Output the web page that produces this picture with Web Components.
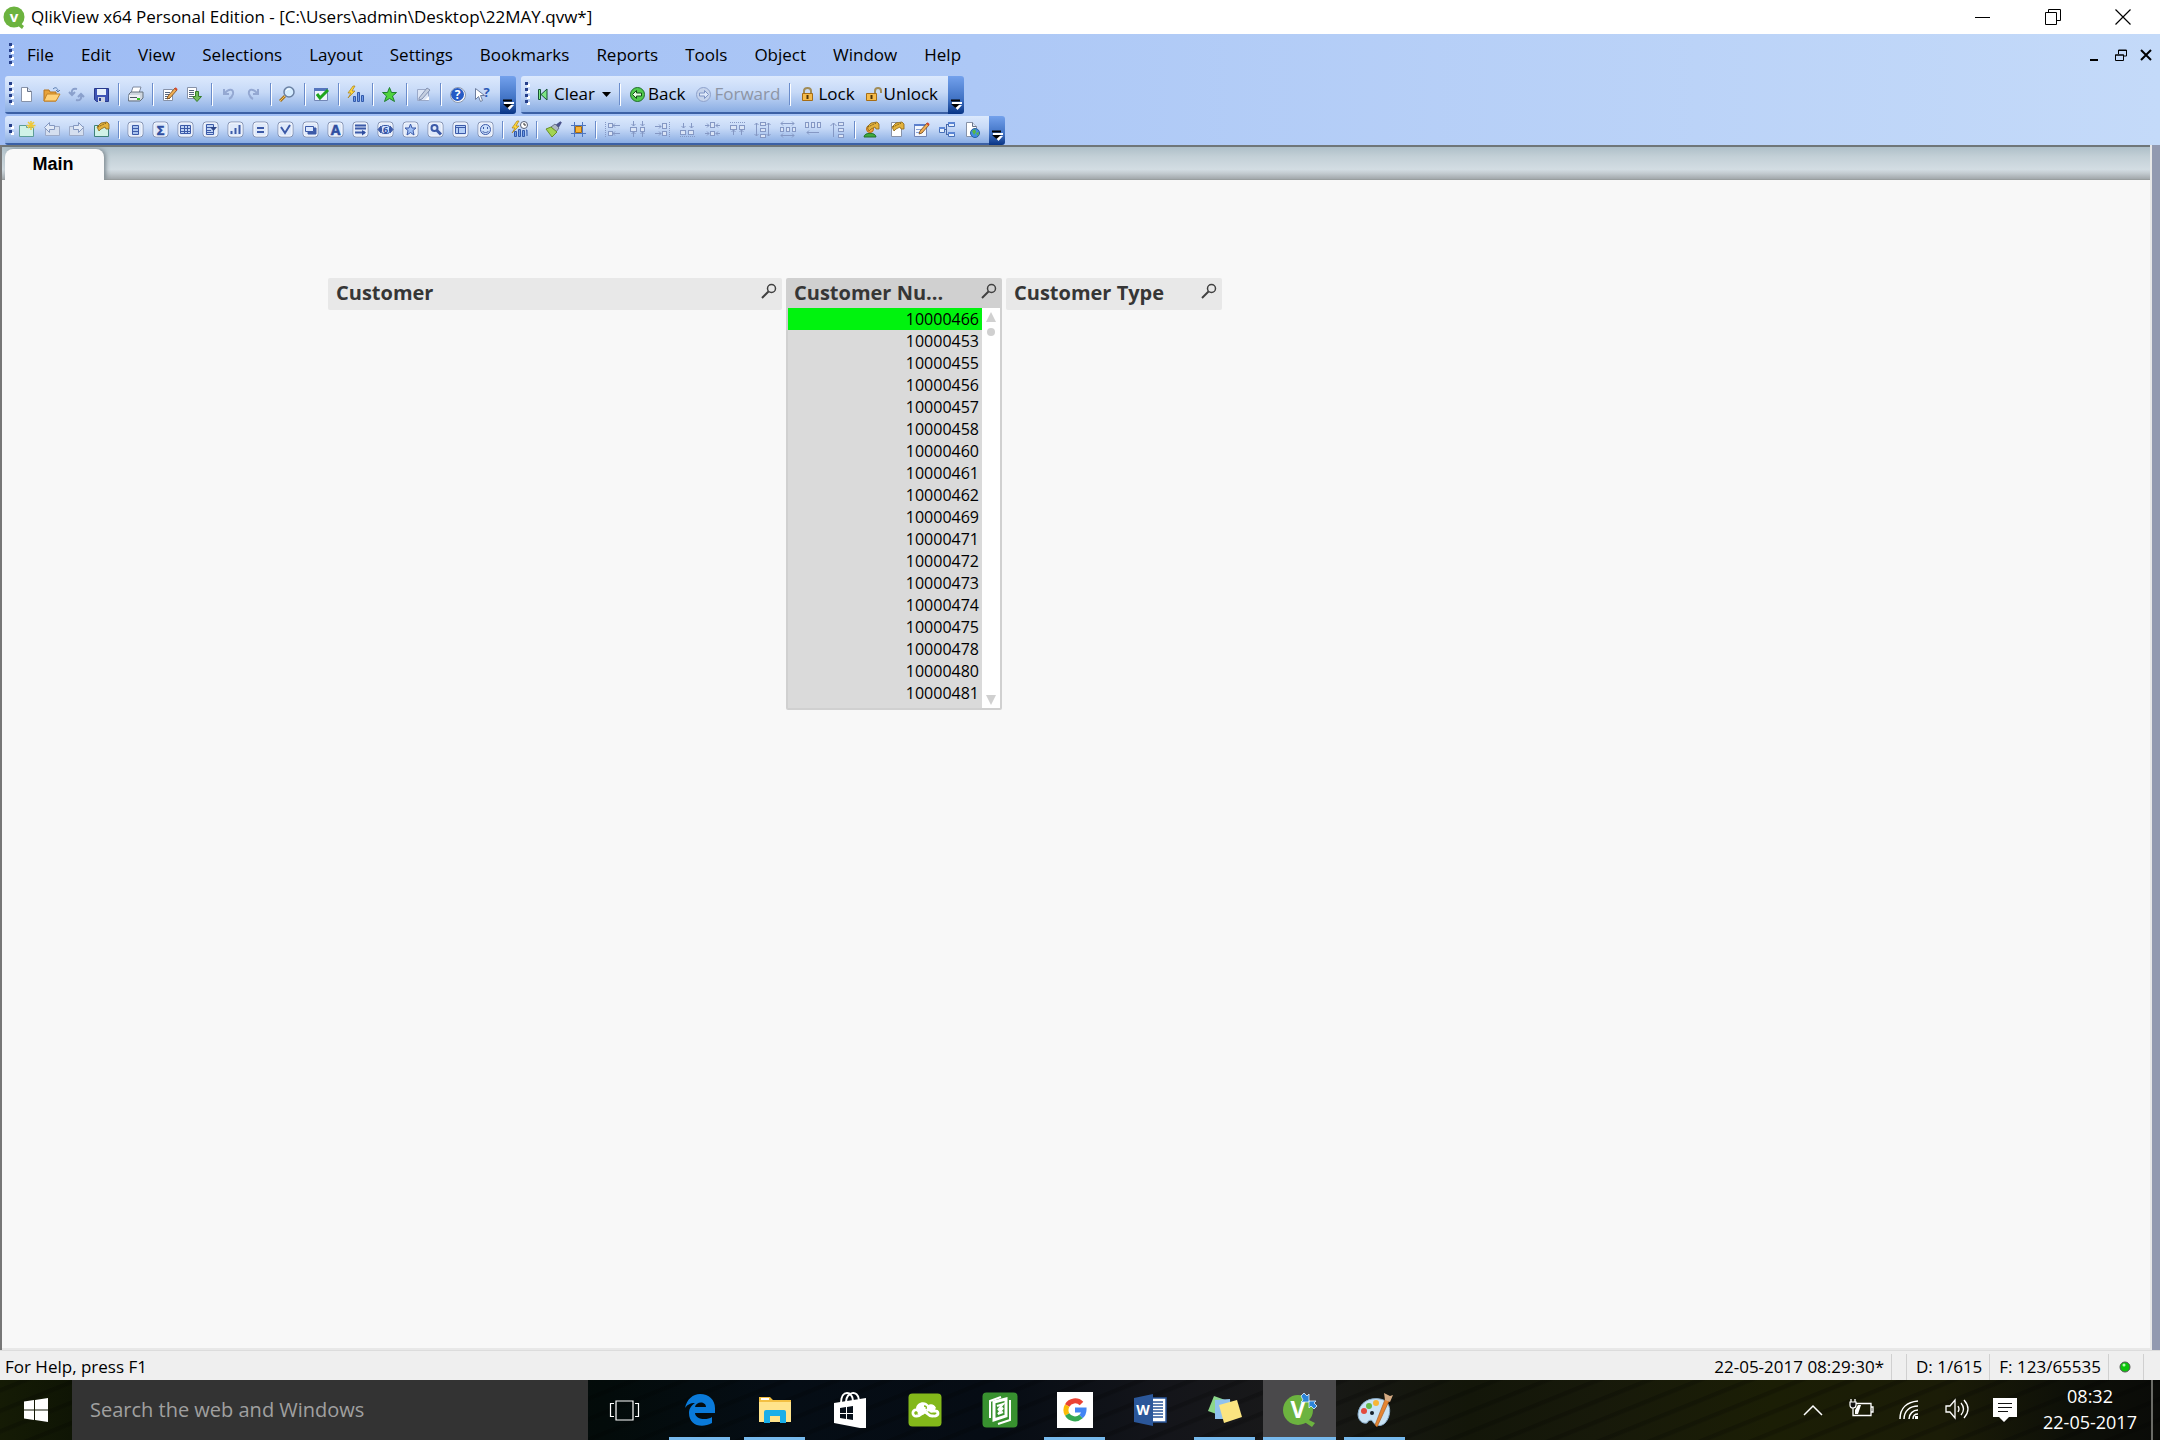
<!DOCTYPE html>
<html lang="en">
<head>
<meta charset="utf-8">
<title>QlikView x64 Personal Edition</title>
<style>
html,body{margin:0;height:100%}
body{font:17px/24px "Open Sans","Noto Sans",sans-serif;color:#000;overflow:hidden}
</style>
</head>
<body>
<qv-app></qv-app>
<script>
const framed = (inner) => `<rect x="1" y="1" width="15" height="15" rx="3" fill="#dfe9fa" stroke="#8593b3"/><rect x="2" y="2" width="13" height="13" rx="2" fill="none" stroke="#fff" stroke-opacity=".7"/><g stroke="#3c5aa8" fill="none" stroke-width="1">${inner}</g>`;
const g = (inner) => `<g stroke="#8598c4" fill="none" stroke-width="1">${inner}</g>`;
const box = (x, y, w, h) => `<rect x="${x}.5" y="${y}.5" width="${w}" height="${h}" fill="#dbe5f6"/>`;
const hand = `<path d="M4 6l4-4 6-1 2 2v5h-3l-1-2-4 2-2 2-1-2z" fill="#e3b23c" stroke="#8a6414" stroke-width=".8"/><path d="M5 6l8-4" stroke="#5d430c" stroke-dasharray="1 1"/>`;
const page = `<path d="M3.500 1.500h6l4 4v10h-10z" fill="#fff" stroke="#8792a8"/><path d="M9.500 1.500v4h4" fill="#dde6f4" stroke="#67738a"/>`;
const bolt = `<path d="M6 0L1 7h3L1 12l7-7H5l3-5z" fill="#ffd83a" stroke="#a8801c" stroke-width=".7"/>`;
const ICONS = {
  logo: [24, `<circle cx="12" cy="12" r="10.500" fill="#6cb33f"/><path d="M17 17l5 4-2 3-5-4z" fill="#6cb33f"/><text x="12" y="17" font-size="15" font-weight="700" text-anchor="middle" fill="#fff">v</text>`],
  newdoc: [17, page],
  open: [17, `<path d="M1 4h5l1 2h6v9H1z" fill="#e8a33a" stroke="#b5731a"/><path d="M4 8h13l-4 7H1z" fill="#ffd27a" stroke="#c78425"/><path d="M10 3c3-3 5 0 5 2m-2-1l2 2 2-2" fill="none" stroke="#5c7fb2"/>`],
  reload: [17, `<path d="M9 3C5 2 3 4 4 8M1 6l3 3 3-3M8 14c4 1 6-1 5-5M10 11l3-3 3 3" fill="none" stroke="#8aa0cc" stroke-width="2"/>`],
  save: [17, `<path d="M1.500 2.500h14v13h-12l-2-2z" fill="#3e55b5" stroke="#283a8c"/><path d="M4 3h9v6H4z" fill="#e6f0fb"/><path d="M5 11h7v5H5z" fill="#cbd3e3"/><path d="M6 12h2v3H6z" fill="#283a8c"/>`],
  print: [17, `<path d="M6 1h8l-2 6H4z" fill="#fff" stroke="#7e8aa0"/><path d="M2 8l2-2h12v6l-3 3H1.500z" fill="#cfd6df" stroke="#67727f"/><path d="M2 9h11v5H2z" fill="#eef1f5"/><path d="M3 11.500h7" stroke="#4e5865"/><rect x="10" y="12" width="3" height="2" fill="#37c426"/>`],
  editpage: [17, `<path d="M2.500 3.500h9v11h-9z" fill="#fff" stroke="#8792a8"/><path d="M4 6.500h5m-5 2h5m-5 2h4m-4 2h5" stroke="#56647e"/><path d="M7 10l7-8 2 2-7 8-3 1z" fill="#f0ae54" stroke="#72471b" stroke-width=".8"/><path d="M14 2l2 2" stroke="#d4472c" stroke-width="2"/>`],
  export: [17, `<path d="M1.500 1.500h9v11h-9z" fill="#fff" stroke="#8792a8"/><path d="M3 4.500h5m-5 2h5m-5 2h5m-5 2h4" stroke="#56647e"/><path d="M9.500 5.500h3v5h3l-4.500 5-4.500-5h3z" fill="#72bd5b" stroke="#377c2a"/>`],
  undo: [17, `<path d="M4 3v5h5M5 7c4-5 9-4 8 1-.5 2-2 4-4 5" fill="none" stroke="#94a8d2" stroke-width="2"/>`],
  redo: [17, `<path d="M13 3v5H8M12 7C8 2 3 3 4 8c.5 2 2 4 4 5" fill="none" stroke="#94a8d2" stroke-width="2"/>`],
  find: [17, `<path d="M6 10l-5 5" stroke="#a67521" stroke-width="3"/><path d="M6 10l-5 5" stroke="#f4c05b" stroke-width="1"/><circle cx="10" cy="6" r="5" fill="#d5ecff" stroke="#6a80a2" stroke-width="1.500"/><path d="M7 5c1-2 3-2 4-2" stroke="#fff" fill="none"/>`],
  selbox: [17, `<path d="M1.500 2.500h13v12h-13z" fill="#edf3fd" stroke="#7286b6"/><path d="M1 2h14v3H1z" fill="#5575bd"/><path d="M4 8l3 4 8-8" fill="none" stroke="#1fa51d" stroke-width="3"/>`],
  boltbars: [17, `<path d="M6.500 10.500h2v5h-2zM10.500 6.500h2v9h-2zM14.500 9.500h2v6h-2z" fill="#6c99e8" stroke="#3259aa"/>` + bolt],
  boltclock: [17, `<path d="M3.500 10.500h2v5h-2zM7.500 8.500h2v7h-2zM11.500 9.500h2v6h-2zM15 9h1v6" fill="#6c99e8" stroke="#3259aa"/>` + bolt + `<circle cx="13" cy="4" r="3.500" fill="#fff" stroke="#566078"/><path d="M13 2v2h2" fill="none" stroke="#333"/>`],
  star: [17, `<path d="M8.500 1.500l2 5h5l-4 3.500 2 5.500-5-3-5 3 2-5.500-4-3.500h5z" fill="#4ed33e" stroke="#1f7f2e"/>`],
  note: [17, `<path d="M2.500 3.500h11v11h-11z" fill="#dce5f5" stroke="#9aa9c9"/><path d="M4 12l8-10 3 2-8 9-3 1z" fill="#c5cfe0" stroke="#8291b2"/><path d="M10 14l4-4v4z" fill="#fff"/>`],
  help: [17, `<circle cx="9" cy="9" r="7.500" fill="#fff" stroke="#8c98ad"/><circle cx="8.500" cy="8.500" r="6.500" fill="#265bc5"/><text x="8.500" y="13" font-size="12" font-weight="700" text-anchor="middle" fill="#fff">?</text>`],
  whats: [17, `<path d="M1.500 2.500v11l3-3 2 5 2-1-2-5h4z" fill="#fff" stroke="#6d7e9f"/><text x="12.500" y="11" font-size="13" font-weight="700" text-anchor="middle" fill="#2957b5">?</text>`],
  clear: [17, `<path d="M3.500 3.500h2v10h-2zM12 3v11L6 8.500z" fill="#7ce684" stroke="#175236"/>`],
  back: [17, `<circle cx="8.500" cy="8.500" r="7" fill="#52ca4c" stroke="#1f6e2a"/><path d="M3.500 8.500l4-4v2.500h5v3h-5V12.500z" fill="#e9ffe3" stroke="#174e1d"/>`],
  forward: [17, `<circle cx="8.500" cy="8.500" r="7" fill="#c5d3ec" stroke="#8ea2cc"/><path d="M13.500 8.500l-4-4v2.500h-5v3h5V12.500z" fill="#dde8fa" stroke="#7e94c4"/>`],
  lock: [17, `<path d="M5 8V5c0-4 7-4 7 0v3" fill="none" stroke="#a18c57" stroke-width="2"/><path d="M3.500 7.500h10v7h-10z" fill="#f5bb4c" stroke="#a66d16"/><path d="M8.500 9v4" stroke="#503407" stroke-width="2"/>`],
  unlock: [17, `<path d="M10 8V5c0-4 6-4 6 0v2" fill="none" stroke="#a18c57" stroke-width="2"/><path d="M1.500 7.500h10v7h-10z" fill="#f5bb4c" stroke="#a66d16"/><path d="M6.500 9v4" stroke="#503407" stroke-width="2"/>`],
  newsheet: [17, `<path d="M1.500 4.500h7v2h7v9h-14z" fill="#d0f2e7" stroke="#5d9d97"/><path d="M13 0v9M8.500 4.500h9M10 1l6 6m0-6l-6 6" stroke="#eec93b" stroke-width="1.500"/>`],
  sheetleft: [17, `<path d="M2.500 5.500h14v9h-14z" fill="#d5dfef" stroke="#9dabc8"/><path d="M1.500 6.500l5-5v3h5v4h-5v3z" fill="#e2eaf7" stroke="#8498c0"/>`],
  sheetright: [17, `<path d="M1.500 5.500h14v9h-14z" fill="#d5dfef" stroke="#9dabc8"/><path d="M15.500 6.500l-5-5v3h-5v4h5v3z" fill="#e2eaf7" stroke="#8498c0"/>`],
  sheetprops: [17, `<path d="M1.500 4.500h14v11h-14z" fill="#d0f2e7" stroke="#3e8179"/>` + hand],
  list: [17, framed(`<path d="M5.500 4.500h6v9h-6zM5 7.500h7M5 10.500h7" fill="#a9c3ee"/>`)],
  sigma: [17, framed(`<text x="8.500" y="13.500" font-size="13" font-weight="700" text-anchor="middle" fill="#2f4ea0" stroke="#2f4ea0" stroke-width=".5">Σ</text>`)],
  grid: [17, framed(`<path d="M3.500 4.500h10v8h-10zM3 7.500h11M3 10.500h11M7.500 4v9M10.500 4v9" fill="#c0d4f5"/>`)],
  multi: [17, framed(`<path d="M4.500 3.500h7v10h-7zM4 6.500h5M4 9.500h5M4 11.500h7" fill="#c0d4f5"/><path d="M8 6h7l-3.500 4z" fill="#2d4688" stroke="none"/>`)],
  chart: [17, framed(`<path d="M4.500 10v3M8.500 7v6M12.500 4v9" stroke-width="2"/>`)],
  equal: [17, framed(`<path d="M5 7h7M5 11h7" stroke-width="2"/>`)],
  check: [17, framed(`<path d="M4 6l4 6 5-8" stroke-width="2"/>`)],
  button: [17, framed(`<path d="M6 11v2h8V7h-2" fill="#3c5aa8"/><path d="M3.500 5.500h8v5h-8z" fill="#dce9ff"/>`)],
  letter: [17, framed(`<text x="8.500" y="13.500" font-size="14" font-weight="700" text-anchor="middle" fill="#2f4ea0" stroke="#2f4ea0" stroke-width=".5">A</text>`)],
  lines: [17, framed(`<path d="M3 4.500h11M3 7.500h11M3 11.500h10" stroke-width="2"/><path d="M10 9l4 2.500-4 3z" fill="#2f4ea0" stroke="none"/>`)],
  slider: [17, framed(`<path d="M4 5l-3 3.500L4 12zM13 5l3 3.500L13 12z" fill="#3c5aa8"/><rect x="4.500" y="4.500" width="8" height="8" rx="2" fill="#cfe1ff"/><text x="8.500" y="12" font-size="9" font-weight="700" text-anchor="middle" fill="#2f4ea0" stroke="none">6</text>`)],
  bookmark: [17, framed(`<path d="M8.500 3l1.500 4h4l-3 2.500 1 4.500-3.500-2.500L5 14l1-4.500L3 7h4z" fill="#9ebff5"/>`)],
  search: [17, framed(`<circle cx="7.500" cy="7" r="3" stroke-width="2"/><path d="M10 9.500l4 4" stroke-width="3"/>`)],
  container: [17, framed(`<path d="M3.500 4.500h10v8h-10zM3 6.500h11M6.500 6v7" fill="#b4cff8"/>`)],
  smile: [17, framed(`<circle cx="8.500" cy="8.500" r="5" fill="#cce0fb"/><path d="M6.500 6v2M10.500 6v2M5.500 10c1 2 5 2 6 0"/>`)],
  brush: [17, `<path d="M16 1l-4 3 1 2z" fill="#6672a8" stroke="#4c548c" stroke-width="2"/><path d="M10 3l4 4-3 4-5-5z" fill="#aeb8c6" stroke="#697289"/><path d="M6 6l6 5-5 5-6-8z" fill="#a3d451" stroke="#688e27"/>`],
  snap: [17, `<path d="M4.500 1v15M12.500 1v15M1 4.500h15M1 12.500h15" stroke="#4d76c1"/><path d="M5.500 5.500h6v6h-6z" fill="#f9b335" stroke="#a96c10"/>`],
  al1: [17, g(`<path d="M1.500 1v15" stroke-dasharray="1 1"/>${box(4,2,4,4)}${box(4,10,4,4)}<path d="M9 4.500h7m-5-2l-2 2 2 2M9 12.500h7m-5-2l-2 2 2 2"/>`)],
  al2: [17, g(`${box(1,6,6,4)}${box(11,6,4,4)}<path d="M4.500 0v5M13.500 0v5M4.500 16v-5M13.500 16v-5M2.500 3l2 2 2-2m5 0l2 2 2-2M2.500 13l2-2 2 2m5 0l2-2 2 2"/>`)],
  al3: [17, g(`<path d="M15.500 1v15" stroke-dasharray="1 1"/>${box(8,2,4,5)}${box(8,10,4,4)}<path d="M1 5.500h6m-2-2l2 2-2 2M1 12.500h6m-2-2l2 2-2 2"/>`)],
  al4: [17, g(`<path d="M1 15.500h15" stroke-dasharray="1 1"/>${box(1,9,5,4)}${box(9,9,5,4)}<path d="M4.500 2v5m-2-2l2 2 2-2M12.500 2v5m-2-2l2 2 2-2"/>`)],
  al5: [17, g(`${box(6,1,4,5)}${box(6,10,4,4)}<path d="M1 4.500h4m-2-2l2 2-2 2M16 4.500h-4m2-2l-2 2 2 2M1 12.500h4m-2-2l2 2-2 2M16 12.500h-4m2-2l-2 2 2 2"/>`)],
  al6: [17, g(`<path d="M1 1.500h15" stroke-dasharray="1 1"/>${box(1,4,6,4)}${box(10,4,5,4)}<path d="M4.500 14V9m-2 2l2-2 2 2M12.500 14V9m-2 2l2-2 2 2"/>`)],
  al7: [17, g(`${box(6,1,5,3)}${box(6,7,5,3)}${box(6,13,5,3)}<path d="M2.500 2v13m-2-11l2-2 2 2m-4 9l2 2 2-2M14.500 2v13m-2-11l2-2 2 2m-4 9l2 2 2-2"/>`)],
  al8: [17, g(`${box(1,6,3,4)}${box(7,6,3,4)}${box(13,6,3,4)}<path d="M2 2.500h13M4 .5l-2 2 2 2m9-4l2 2-2 2M2 14.500h13m-11-2l-2 2 2 2m9-4l2 2-2 2"/>`)],
  al9: [17, g(`${box(1,1,3,5)}${box(7,1,3,5)}${box(13,1,3,5)}<path d="M3 11.500h12m-10-2l-2 2 2 2"/>`)],
  al10: [17, g(`${box(9,1,5,3)}${box(9,7,5,3)}${box(9,13,5,3)}<path d="M4.500 16V2m-3 3l3-3 3 3"/>`)],
  user: [17, `<path d="M1 16c0-5 12-5 12 0z" fill="#3faa3d" stroke="#22702b"/><circle cx="7" cy="8" r="3.500" fill="#f6a53f" stroke="#b96c18"/>` + hand],
  pageprops: [17, page + hand],
  editform: [17, `<path d="M1.500 3.500h12v12h-12z" fill="#f4f8ff" stroke="#7286b6"/><path d="M1 3h12v2H1z" fill="#5b7fcd"/><path d="M3 8.500h6m-6 3h7" stroke="#8aa4d8"/><path d="M7 10l7-8 2 2-7 8-3 1z" fill="#f0ae54" stroke="#72471b" stroke-width=".8"/><path d="M14 2l2 2" stroke="#d4472c" stroke-width="2"/>`],
  tables: [17, `<path d="M5 8.500h3M8.500 4v9M8 3.500h3M8 13.500h3" stroke="#4666a6" fill="none"/><g fill="#e5effd" stroke="#4770b8"><path d="M1.500 6.500h5v5h-5zM10.500 1.500h6v4h-6zM10.500 11.500h6v4h-6z"/></g><path d="M1 7h6M10 2h7M10 12h7" stroke="#5c86d4" stroke-width="2"/>`],
  web: [17, page + `<circle cx="12" cy="12" r="4.500" fill="#438ce2" stroke="#265fa2"/><path d="M9 10l3-2 1 3-2 3zM13 12l3-1-1 4z" fill="#58ba42"/>`],
  caret: [10, `<path d="M0 3h9L4.500 8z" fill="#000"/>`],
  over: [12, `<path d="M2 3h10v2H2z" fill="#fff"/><path d="M1 1.500h9" stroke="#000" stroke-width="2"/><path d="M3 6h9l-4.500 5z" fill="#fff"/><path d="M1 5h9l-4.500 4z" fill="#000"/>`],
  min: [16, `<path d="M0 8.500h15" stroke="#000"/>`],
  restore: [16, `<path d="M.500 3.500h11v12H.500zM3.500 3V.500h12v11H12" fill="none" stroke="#000"/>`],
  close: [16, `<path d="M.500.500l15 15m0-15l-15 15" stroke="#000" stroke-width="1.200"/>`],
  mmin: [12, `<path d="M0 11h8" stroke="#000" stroke-width="2"/>`],
  mrestore: [12, `<path d="M.500 6h8v5.500h-8zM3.500 5V1h8v6H9M3 1.500h9M0 6h9" fill="none" stroke="#000"/>`],
  mclose: [12, `<path d="M1 1l10 10m0-10L1 11" stroke="#000" stroke-width="2"/>`],
  lens: [16, `<circle cx="10.500" cy="5.500" r="4" fill="none" stroke="#404040" stroke-width="1.500"/><path d="M7.500 8.500L1 15" stroke="#404040" stroke-width="2"/>`],
  up: [10, `<path d="M5 0l5 10H0z" fill="#d0d0d0"/>`],
  down: [10, `<path d="M5 10L0 0h10z" fill="#d0d0d0"/>`],
  win: [24, `<path d="M0 3.500l10-1.500v9.500H0zM11 2l13-2v11.500H11zM0 12.500h10V22L0 20.500zM11 12.500h13V24l-13-2z" fill="#fff"/>`],
  taskview: [32, `<path d="M7 7h17v19H7zM5 9.500H1.500v13H5M26 9.500h3.500v13H26" fill="none" stroke="#fff" stroke-width="1.200"/>`],
  edge: [32, `<path d="M1 14C3 5 9 0 16 0c9 0 15 6 15 14v5H11c0 6 11 8 17 4v6c-11 6-23 2-23-10 0-5 3-8 6-10-5 0-8 2-10 5zm10-1h11c0-6-10-6-11 0z" fill="#0a7ad9"/>`],
  explorer: [32, `<path d="M0 3h11l3 3h18v22H0z" fill="#f3bf42"/><path d="M2 4h8v2H2z" fill="#fff"/><path d="M0 8h32v20H0z" fill="#ffe38b"/><path d="M5 29V18q0-2 2-2h18q2 0 2 2v11h-6v-7H11v7z" fill="#19aee9"/>`],
  store: [36, `<path d="M9 11C9-3 21-1 21 9M14 10c0-10 12-13 13-2" fill="none" stroke="#fff" stroke-width="2"/><path d="M2 11l32-5v30l-6 0L2 31z" fill="#fff"/><path d="M8 16l6-1v6H8zM15 15l6-1v7h-6zM8 22h6v5l-6-1zM15 22h6v6l-6-1z" fill="#07101a"/>`],
  cloud: [34, `<rect x=".5" y=".5" width="33" height="33" rx="4" fill="#83b81a"/><path d="M8 16c0-8 11-9 13-3 3-2 6-1 7 2l-5 3-4-1-4 5-5-3z" fill="#fff"/><path d="M11 20a3 3 0 1 0-3 3c4 1 6-4 9-4 3 1 4 5 8 4M20 17c-1-5 6-6 6-1 0 2-3 3-4 1M26 18c5-1 5 5 1 5" fill="none" stroke="#fff" stroke-width="3" stroke-linecap="round"/><path d="M9 20a1 1 0 1 0-1 1M18 16c1-2 0-3-2-3" fill="none" stroke="#83b81a" stroke-width="1.300"/>`],
  notebook: [36, `<rect x=".5" y=".5" width="35" height="35" rx="4" fill="#38912f"/><path d="M28 8v20l-12 4M8 26V9l11-4" fill="none" stroke="#fff" stroke-width="2"/><path d="M12 10l12-3v17l-12 4z" fill="none" stroke="#fff" stroke-width="3"/><path d="M15 14l6-2-5 6 5-2-5 6 5-2" fill="none" stroke="#fff" stroke-width="2"/>`],
  google: [36, `<path fill="#fff" d="M0 0h36v36H0z"/><g fill="none" stroke-width="5"><path d="M24.500 11.500A9 9 0 0 0 10.200 13.500" stroke="#ea4335"/><path d="M10.200 13.500a9 9 0 0 0 0 9" stroke="#fbbc05"/><path d="M10.200 22.500A9 9 0 0 0 24 24.500" stroke="#34a853"/><path d="M24 24.500a9 9 0 0 0 3-6.500h-9" stroke="#4285f4"/></g>`],
  word: [32, `<path d="M17 4h15v24H17z" fill="#fff" stroke="#2b579a" stroke-width="1.500"/><path d="M19 8h10M19 11h10M19 14h10M19 17h10M19 20h10M19 23h10" stroke="#2b579a" stroke-width="1.500"/><path d="M0 4l19-4v32L0 28z" fill="#2b579a"/><text x="9" y="21" font-size="14" font-weight="700" text-anchor="middle" fill="#fff">W</text>`],
  sticky: [34, `<path d="M6 3l14 5-6 15-14-5z" fill="#8cd68a"/><path d="M7 7l15-1 1 20H7z" fill="#8fc1ee"/><path d="M11 12l18-5 5 17-18 6z" fill="#fbe480"/>`],
  qlik: [34, `<circle cx="15" cy="17" r="15" fill="#6cb33f"/><path d="M22 25l10 5-3 4-9-6z" fill="#6cb33f"/><text x="15" y="25" font-size="23" font-weight="700" text-anchor="middle" fill="#fff">V</text><path d="M18 3l3-3 3 3 2-2v8h-8l2-2zM34 13l-3 3-3-3-2 2V8h7l-2 2z" fill="#2c84d8" stroke="#e5f3ff" stroke-width=".8"/>`],
  paint: [36, `<path d="M1 22C2 11 12 5 23 7c13 2 11 18 5 24-4 4-10 3-12-1-1-3-5-2-6 1-5 1-9-3-9-9z" fill="#c9e3f5" stroke="#88abc8"/><circle cx="7" cy="19" r="3" fill="#e24b3d"/><circle cx="12" cy="14" r="3" fill="#62b948"/><circle cx="19" cy="11" r="3" fill="#f7b535"/><circle cx="15" cy="21" r="2" fill="#15212b"/><path d="M29 5l4 2-13 28-2-2z" fill="#e58532" stroke="#9d551d" stroke-width=".6"/><path d="M27 1l6 3 3-1-3 7-5-2z" fill="#d4aa82"/>`],
  chevron: [20, `<path d="M1 15l9-9 9 9" fill="none" stroke="#fff" stroke-width="1.500"/>`],
  battery: [24, `<path d="M7 5.500h15v12H8M22 9h2v5h-2M2 1v4M6 1v4M4 9v8.500h4" fill="none" stroke="#fff" stroke-width="1.300"/><path d="M1 4h6v3q0 3-3 3T1 7z" fill="#111" stroke="#fff" stroke-width="1.200"/><path d="M9 7h3l-3 9H6v-4z" fill="#fff"/>`],
  wifi: [20, `<g fill="none" stroke="#fff" stroke-width="1.500"><path d="M1 19C1 8 8 2 19 1M5 19C5 11 11 6 19 6M10 19c0-5 4-9 9-9M14 19c0-3 2-5 5-5"/></g><path d="M16 16h3v3h-3z" fill="#fff"/>`],
  volume: [24, `<path d="M1 8h4l5-6v18l-5-6H1zM13 8q2 3 0 6M16 5q5 6 0 12M19 2q8 9 0 18" fill="none" stroke="#fff" stroke-width="1.300"/>`],
  notify: [24, `<path d="M0 0h24v19h-8l-5 5-5-5H0z" fill="#fff"/><path d="M5 5.500h14M5 9.500h14M5 13.500h10" stroke="#111"/>`],
  led: [12, `<circle cx="6" cy="6" r="5" fill="#0bc40b" stroke="#555"/><circle cx="5" cy="4" r="1.500" fill="#b7ffb0"/>`]
};

function define(name, html, setup) {
  const tpl = document.createElement('template');
  tpl.innerHTML = html;
  customElements.define(name, class extends HTMLElement {
    connectedCallback() {
      if (this.shadowRoot) return;
      this.attachShadow({ mode: 'open' }).append(tpl.content.cloneNode(true));
      if (setup) setup(this.shadowRoot, this);
    }
  });
}
const BTN = `button{appearance:none;border:0;margin:0;padding:0;background:none;font:inherit;color:inherit;display:flex;align-items:center;justify-content:center}`;

define('qv-icon', `<style>:host{display:block;flex:none}svg{display:block;overflow:visible;font-family:"Open Sans",sans-serif}</style>`, (root, el) => {
  const [size, art] = ICONS[el.getAttribute('name')];
  root.innerHTML += `<svg width="${size}" height="${size}" viewBox="0 0 ${size} ${size}" aria-hidden="true">${art}</svg>`;
});

define('title-bar', `<style>${BTN}:host{display:flex;align-items:center;height:34px;background:#fff;padding:0 2px}
.t{flex:1;padding-left:5px}button{width:70px;height:34px}</style>
<qv-icon name="logo"></qv-icon><span class="t"><slot></slot></span>
<button aria-label="Minimize"><qv-icon name="min"></qv-icon></button><button aria-label="Restore"><qv-icon name="restore"></qv-icon></button><button aria-label="Close"><qv-icon name="close"></qv-icon></button>`);

define('tool-grip', `<style>:host{display:block;width:5px;margin-left:4px;align-self:center}
svg{display:block}</style><svg width="5" aria-hidden="true"></svg>`, (root, el) => {
  const n = Number(el.getAttribute('dots') || 4);
  const svg = root.querySelector('svg');
  svg.setAttribute('height', n * 6);
  svg.innerHTML = Array.from({ length: n }, (_, i) => `<path fill="#fff" d="M2 ${i * 6 + 2}h3v3H2z"/><path fill="#27408b" d="M0 ${i * 6}h3v3H0z"/>`).join('');
});

define('menu-bar', `<style>${BTN}:host{display:flex;align-items:center;height:42px;padding:0 2px 0 5px}
nav{display:flex;flex:1;gap:1px}nav button{padding:0 13px;height:30px}.w{width:25px;height:24px}</style>
<tool-grip></tool-grip><nav></nav><button class="w" aria-label="Minimize document"><qv-icon name="mmin"></qv-icon></button><button class="w" aria-label="Restore document"><qv-icon name="mrestore"></qv-icon></button><button class="w" aria-label="Close document"><qv-icon name="mclose"></qv-icon></button>`, (root, el) => {
  root.querySelector('nav').innerHTML = el.getAttribute('items').split(',').map(t => `<button>${t}</button>`).join('');
});

define('tool-button', `<style>${BTN}:host{display:flex}button{min-width:25px;gap:2px}:host([wide]) button{padding:0 5px}:host([narrow]) button{min-width:15px}button:disabled{color:#8d95a5}</style><button></button>`, (root, el) => {
  const b = root.querySelector('button');
  const text = el.textContent;
  b.innerHTML = `<qv-icon name="${el.getAttribute('icon')}"></qv-icon>${text ? '<slot></slot>' : ''}`;
  if (!text) b.setAttribute('aria-label', el.getAttribute('icon'));
  b.disabled = el.hasAttribute('disabled');
});
define('tool-sep', `<style>:host{display:flex;width:9px;justify-content:center;align-items:center}i{width:1px;height:60%;background:#6a8ccb;box-shadow:1px 1px #fff}</style><i></i>`);
define('tool-bar', `<style>${BTN}:host{display:flex;height:38px;border-radius:3px;overflow:hidden}
.b{display:flex;padding-right:5px;box-sizing:border-box;border-bottom:2px solid #3b60a5;background:linear-gradient(#dce9fd,#c6d9f7 45%,#8aade3)}
.o{width:16px;align-items:flex-end;padding-bottom:3px;background:linear-gradient(#73a1ec,#4173c5 60%,#083485)}
:host([small]){height:29px}</style>
<div class="b"><slot></slot></div><button class="o" aria-label="Toolbar options"><qv-icon name="over"></qv-icon></button>`);

define('sheet-tabs', `<style>${BTN}:host{display:flex;align-items:flex-end;box-sizing:border-box;height:35px;padding:0 3px;border-top:2px solid #6f7678;border-bottom:1px solid #999e9f;background:linear-gradient(#aebfc8,#c3d0d7 30%,#d3dde3 70%,#c3cbd0 82%,#a2a8ab)}
button{width:99px;height:31px;margin-bottom:-1px;padding:0 3px 2px 0;border-radius:8px 8px 0 0;background:#f9f9f9;font:700 18px/24px "Liberation Sans",Arial,sans-serif;box-shadow:2px 0 4px #7f8b92;clip-path:inset(-4px -8px 0 -3px)}</style><button><slot></slot></button>`);

define('list-box', `<style>${BTN}:host{display:block;box-sizing:border-box;width:216px;border-radius:2px;background:#e8e8e8;color:#363636}
:host([wide]){width:454px}
header{display:flex;align-items:center;box-sizing:border-box;height:32px;padding:0 5px 2px 8px;font-weight:700;font-size:20px;line-height:28px}
span{flex:1;white-space:nowrap}
header button{align-self:flex-start;padding-top:5px}
:host([open]){background:#d0d0d0}:host([open]) header{height:30px;padding-bottom:0}
.m{display:flex;margin:0 2px 2px;height:400px;background:#dadada;color:#000}
ul{flex:1;margin:0;padding:0;list-style:none;font-size:16px;line-height:22px;text-align:right}
li{padding-right:3px;height:22px}li[aria-selected=true]{background:#00f30e}
.s{width:18px;background:#fff;display:flex;flex-direction:column;align-items:center;padding:4px 0 3px;box-sizing:border-box}
.s i{width:8px;height:8px;border-radius:4px;background:#d0d0d0;margin-top:6px}.s b{flex:1}</style>
<header><span></span><button aria-label="Search field"><qv-icon name="lens"></qv-icon></button></header>`, (root, el) => {
  root.querySelector('span').textContent = el.getAttribute('heading');
  const v = el.getAttribute('values');
  if (!v) return;
  const m = document.createElement('div');
  m.className = 'm';
  m.innerHTML = `<ul role="listbox" aria-label="Customer Number">${v.split(' ').map((t, i) => `<li role="option" aria-selected="${i === 0}">${t}</li>`).join('')}</ul>
  <div class="s"><button aria-label="Scroll up"><qv-icon name="up"></qv-icon></button><i></i><b></b><button aria-label="Scroll down"><qv-icon name="down"></qv-icon></button></div>`;
  root.append(m);
});

define('status-bar', `<style>:host{display:flex;align-items:center;box-sizing:border-box;height:30px;border-top:1px solid #dcdcdc;background:#efefef;padding:0 16px 0 5px}
.h{flex:1;padding-top:3px}.c{display:flex;align-items:center;height:26px;margin-top:2px;padding:0 7px 0 9px;border-right:1px solid #d0d0d0}.e{width:14px;padding:0}.l{padding:0 12px 0 10px}</style>
<span class="h">For Help, press F1</span><span class="c">22-05-2017 08:29:30*</span><span class="c e"></span><span class="c">D: 1/615</span><span class="c">F: 123/65535</span><span class="c l"><qv-icon name="led"></qv-icon></span>`);

define('task-button', `<style>${BTN}:host{display:block;width:73px}button{width:100%;height:60px}
:host([running]) button{background:linear-gradient(#76b9ed,#76b9ed) center bottom/61px 3px no-repeat}
:host([active]) button{background:linear-gradient(#76b9ed,#76b9ed) center bottom/100% 3px no-repeat,#4a494b}</style><button></button>`, (root, el) => {
  const b = root.querySelector('button');
  b.setAttribute('aria-label', el.getAttribute('icon'));
  b.innerHTML = `<qv-icon name="${el.getAttribute('icon')}"></qv-icon>`;
});

define('task-bar', `<style>${BTN}:host{display:flex;height:60px;color:#fff;font-size:18px;
background:repeating-linear-gradient(158deg,#0000 0 7px,#0003 8px 11px,#0000 13px 19px),linear-gradient(90deg,#151b05,#0a1004 6%,#030b0a 28%,#050d15 36%,#060c14 46%,#14151a 54%,#191919 60%,#131609 68%,#17190a 74%,#1b1e05 82%,#1b1c07 90%,#0d0f08 96%,#0a0b08)}
.st{width:72px}input{appearance:none;width:516px;box-sizing:border-box;border:0;border-radius:0;margin:0;padding:0 0 0 18px;background:#333;font:20px/28px "Open Sans","Noto Sans",sans-serif;color:#fff}
input::placeholder{color:#a0a0a0;opacity:1}
.a{display:flex;gap:2px;flex:1}
.tray{display:flex;align-items:center}.tray button{width:48px;height:60px}
time{display:block;width:122px;text-align:center;line-height:26px;padding-top:3px}.d{width:7px;border-left:2px solid #6a6b66}</style>
<button class="st" aria-label="Start"><qv-icon name="win"></qv-icon></button>
<input type="text" aria-label="Search" placeholder="Search the web and Windows">
<div class="a"></div>
<div class="tray"><button aria-label="Show hidden icons"><qv-icon name="chevron"></qv-icon></button><button aria-label="Battery"><qv-icon name="battery"></qv-icon></button><button aria-label="Network"><qv-icon name="wifi"></qv-icon></button><button aria-label="Volume"><qv-icon name="volume"></qv-icon></button><button aria-label="Notifications"><qv-icon name="notify"></qv-icon></button></div>
<time>08:32<br>22-05-2017</time><div class="d"></div>`, (root) => {
  root.querySelector('.a').innerHTML = ['taskview', 'edge running', 'explorer running', 'store', 'cloud', 'notebook', 'google running', 'word', 'sticky running', 'qlik active', 'paint running']
    .map(s => { const [i, f = ''] = s.split(' '); return `<task-button icon="${i}" ${f}></task-button>`; }).join('');
});

const tools = (s) => s.split(' ').map(n => n === '|' ? '<tool-sep></tool-sep>' : `<tool-button icon="${n}"></tool-button>`).join('');
define('qv-app', `<style>:host{display:flex;flex-direction:column;height:100vh}
.top{background:linear-gradient(90deg,#9ebcf4,#adc8f6 45%,#c4daf9)}
.row{display:flex;gap:5px;padding:0 5px 2px}.row.two{padding-bottom:0}
.mid{flex:1;display:flex;flex-direction:column;border-left:2px solid #777;border-right:8px solid #9299b0}
.in{flex:1;display:flex;flex-direction:column;border-right:2px solid #e8e8e8;border-bottom:2px solid #e8e8e8}
main{flex:1;display:flex;align-items:flex-start;gap:4px;background:#f8f8f8;padding:98px 0 0 326px}</style>
<title-bar>QlikView x64 Personal Edition - [C:\\Users\\admin\\Desktop\\22MAY.qvw*]</title-bar>
<div class="top">
<menu-bar items="File,Edit,View,Selections,Layout,Settings,Bookmarks,Reports,Tools,Object,Window,Help"></menu-bar>
<div class="row"><tool-bar><tool-grip></tool-grip>${tools('newdoc open reload save | print | editpage export | undo redo | find | selbox | boltbars | star | note | help whats')}</tool-bar>
<tool-bar><tool-grip></tool-grip><tool-button wide icon="clear">Clear</tool-button><tool-button narrow icon="caret"></tool-button><tool-sep></tool-sep><tool-button wide icon="back">Back</tool-button><tool-button wide disabled icon="forward">Forward</tool-button><tool-sep></tool-sep><tool-button wide icon="lock">Lock</tool-button><tool-button wide icon="unlock">Unlock</tool-button></tool-bar></div>
<div class="row two"><tool-bar small><tool-grip dots="2"></tool-grip>${tools('newsheet sheetleft sheetright sheetprops | list sigma grid multi chart equal check button letter lines slider bookmark search container smile | boltclock | brush snap | al1 al2 al3 al4 al5 al6 al7 al8 al9 al10 | user pageprops editform tables web')}</tool-bar></div>
</div>
<div class="mid"><div class="in"><sheet-tabs>Main</sheet-tabs>
<main><list-box wide heading="Customer"></list-box>
<list-box open heading="Customer Nu..." values="10000466 10000453 10000455 10000456 10000457 10000458 10000460 10000461 10000462 10000469 10000471 10000472 10000473 10000474 10000475 10000478 10000480 10000481"></list-box>
<list-box heading="Customer Type"></list-box></main></div></div>
<status-bar></status-bar><task-bar></task-bar>`);
</script>
</body>
</html>
